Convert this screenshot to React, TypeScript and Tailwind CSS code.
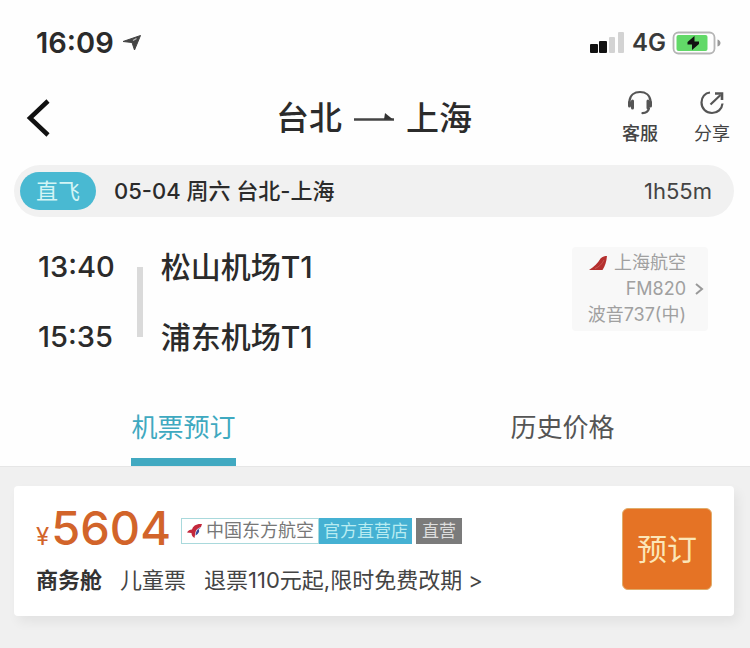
function LocationArrow() {
  return (
    <svg viewBox="0 0 20 18" className="w-5 h-[18px]" fill="none">
      <path d="M18.500 1.500 12.500 16 10 8.500 1 7.500Z" fill="#444444" stroke="#444444" strokeWidth="1" />
      <path d="M14.500 4.500 11 6.500" stroke="#bbbbbb" strokeWidth="1.2" />
    </svg>
  );
}

function SignalBars() {
  return (
    <svg viewBox="0 0 36 22" className="w-9 h-[22px]">
      <rect x="0" y="12" width="8" height="9" rx="1" fill="#111111" />
      <rect x="9" y="9" width="8" height="12" rx="1" fill="#111111" />
      <rect x="19" y="5" width="6" height="16" rx="1" fill="#d3d3d3" />
      <rect x="28" y="0" width="6" height="21" rx="1" fill="#d3d3d3" />
    </svg>
  );
}

function Battery() {
  return (
    <svg viewBox="0 0 50 24" className="w-[50px] h-6" fill="none">
      <rect x="1.5" y="1.5" width="41" height="21" rx="5" stroke="#b5b5b5" strokeWidth="1.8" />
      <rect x="4.5" y="4" width="31" height="16" rx="2" fill="#62d968" />
      <path d="M45.5 8.5c4 1 4 6 0 7Z" fill="#999999" />
      <path d="M22.500 5 15.500 11v2.500h4.500V19l7-6v-2.500h-4.500Z" fill="#111111" />
    </svg>
  );
}

function Headset() {
  return (
    <svg viewBox="0 0 28 26" className="w-7 h-[26px]" fill="none" stroke="#555555" strokeWidth="2.2" strokeLinecap="round">
      <path d="M3.500 11C4 5 8.500 2 14 2s10 3 10.500 9" />
      <path d="M3.500 12v4M6.500 11v7" strokeWidth="3" />
      <path d="M24.500 12v4M22 11v7" strokeWidth="3" />
      <path d="M23 18.500c-.8 3-3 4.500-6.500 4.700" />
    </svg>
  );
}

function Share() {
  return (
    <svg viewBox="0 0 28 26" className="w-7 h-[26px]" fill="none" stroke="#555555" strokeWidth="2.200">
      <path d="M12 2.500C7 3 3.500 7 3.500 12.500c0 6 4.500 10.500 10.500 10.500 5.500 0 10-4 10.500-9.500" />
      <path d="M12.500 14.500 22.500 5" />
      <path d="M17 3.500h7V10" strokeWidth="2.600" />
    </svg>
  );
}

function ShanghaiLogo() {
  return (
    <svg viewBox="0 0 20 16" className="w-5 h-4">
      <path d="M19 1c-.5 5.500-2 10.500-4.500 14H1C6 12 10 8 12.500 3.500 14.500 1.500 17 1 19 1Z" fill="#b5302f" />
      <path d="M7 13.500C11 12 14 9 16 5" stroke="#c9605b" strokeWidth=".8" fill="none" />
    </svg>
  );
}

function EasternLogo() {
  return (
    <svg viewBox="0 0 18 18" className="w-[18px] h-[18px]">
      <path d="M16 2C10 1.500 7 4 6 7.500 4 7.500 2 8.500 1 10.500l4.500.5C5.500 13 6.500 15 8.500 16L9.500 10C10.500 7 12.500 6 15 5Z" fill="#c3283c" />
      <path d="M15 5.500C11.500 6.500 10 9 9.500 13.500 13 11.500 14 9 12.500 7.500Z" fill="#3c4a9b" />
    </svg>
  );
}

export default function App() {
  return (
    <div
      className="min-h-screen bg-[#f0f0f0] text-[#2b2b2b]"
      style={{ fontFamily: "Inter, 'Noto Sans CJK SC', sans-serif" }}
    >
      <div className="bg-[#fefefe] border-b border-[#e6e6e6]">

        {/* Status bar */}
        <div className="flex items-center justify-between h-[86px] pl-9 pr-7">
          <div className="flex items-center gap-2 text-[29px] font-semibold">
            <span>16:09</span>
            <LocationArrow />
          </div>
          <div className="flex items-center gap-1.5">
            <SignalBars />
            <span className="text-2xl font-semibold text-[#3a3a3a]">4G</span>
            <Battery />
          </div>
        </div>

        {/* Header */}
        <header className="grid grid-cols-[1fr_auto_1fr] items-center h-16 pl-[22px] pr-5">
          <a href="#back" aria-label="返回" className="w-8">
            <svg viewBox="0 0 30 40" className="w-[30px] h-10" fill="none" stroke="#111111" strokeWidth="4.500">
              <path d="M26 3 8 20l18 17" />
            </svg>
          </a>
          <h1 className="flex items-center gap-3 pr-1 text-[33px] leading-10 font-medium">
            台北
            <svg viewBox="0 0 40 14" className="w-10 h-3.5" fill="none">
              <path d="M0 8.500h40" stroke="#444444" strokeWidth="2.600" />
              <path d="M31 2 39 8.500H30Z" fill="#333333" />
            </svg>
            上海
          </h1>
          <div className="flex justify-end gap-9 text-lg leading-6 text-[#444444]">
            <button className="flex flex-col items-center gap-1.5 font-medium">
              <Headset />
              客服
            </button>
            <button className="flex flex-col items-center gap-1.5">
              <Share />
              分享
            </button>
          </div>
        </header>

        {/* Flight summary */}
        <div className="flex items-center h-[52px] mt-[15px] ml-3.5 mr-4 pl-1.5 pr-[22px] rounded-full bg-[#f1f1f1] text-[22px]">
          <span className="flex items-center justify-center w-[76px] h-[38px] rounded-full bg-[#49b9d2] text-[#d3f5f5]">
            直飞
          </span>
          <span className="ml-[18px] font-medium">05-04 周六 台北-上海</span>
          <span className="ml-auto text-[#444444]">1h55m</span>
        </div>

        {/* Times and airports */}
        <div className="flex items-start justify-between pt-[30px] pl-[38px] pr-[42px]">
          <div className="flex items-center">
            <div className="flex flex-col gap-[30px] text-[29px] leading-10 font-medium">
              <time>13:40</time>
              <time>15:35</time>
            </div>
            <div className="w-1.5 h-[70px] ml-[22px] mr-[18px] bg-[#dadada]" />
            <div className="flex flex-col gap-[30px] text-[30px] leading-10 font-medium">
              <span>松山机场T1</span>
              <span>浦东机场T1</span>
            </div>
          </div>
          <a href="#flight" className="flex items-center gap-2 w-[136px] h-[84px] pr-1 justify-end rounded bg-[#f8f8f8] text-lg leading-[26px] text-[#a0a0a0]">
            <span className="flex flex-col items-end whitespace-nowrap">
              <span className="flex items-center gap-1.5">
                <ShanghaiLogo />
                上海航空
              </span>
              <span>FM820</span>
              <span>波音737(中)</span>
            </span>
            <svg viewBox="0 0 10 14" className="w-2.5 h-3.5" fill="none" stroke="#999999" strokeWidth="2">
              <path d="m2 2 6 5-6 5" />
            </svg>
          </a>
        </div>

        {/* Tabs */}
        <nav className="grid grid-cols-2 mt-[53px] text-[26px] leading-9">
          <button className="flex justify-center pr-2 text-[#3fa9c0]">
            <span className="pb-3 border-b-8 border-[#41a9c1]">机票预订</span>
          </button>
          <button className="flex justify-center text-[#555555]">
            <span>历史价格</span>
          </button>
        </nav>
      </div>

      {/* Fare */}
      <section className="flex items-start justify-between mt-[19px] ml-3.5 mr-4 h-[130px] pt-3 pl-[22px] pr-[22px] rounded bg-white shadow-[4px_6px_12px_rgba(0,0,0,0.06)]">
        <div>
          <div className="flex items-center h-[60px]">
            <p className="flex items-baseline text-[#d2642a]">
              <span className="text-2xl">¥</span>
              <span className="ml-0.5 text-[47px] leading-[60px] font-medium">5604</span>
            </p>
            <div className="flex items-center ml-2.5 mt-1.5 text-[17px] leading-[26px] whitespace-nowrap">
              <span className="flex items-center gap-0.5 h-[26px] px-1 border border-[#a9d9dc] text-lg text-[#777777]">
                <EasternLogo />
                中国东方航空
              </span>
              <span className="h-[26px] px-1 bg-[#45b1d3] text-[#b9ecf1]">官方直营店</span>
              <span className="ml-1 h-[26px] px-1.5 bg-[#7b7b7b] text-[#dedede]">直营</span>
            </div>
          </div>
          <div className="flex items-center gap-[18px] mt-1 text-[22px] leading-9 text-[#444444]">
            <span className="font-semibold text-[#333333]">商务舱</span>
            <span>儿童票</span>
            <a href="#rules">退票110元起,限时免费改期 &gt;</a>
          </div>
        </div>
        <button className="w-[90px] h-[82px] mt-2.5 rounded-md border border-[#e0ac6a] bg-[#e57325] text-[30px] text-[#fbe6b8]">
          预订
        </button>
      </section>
    </div>
  );
}
